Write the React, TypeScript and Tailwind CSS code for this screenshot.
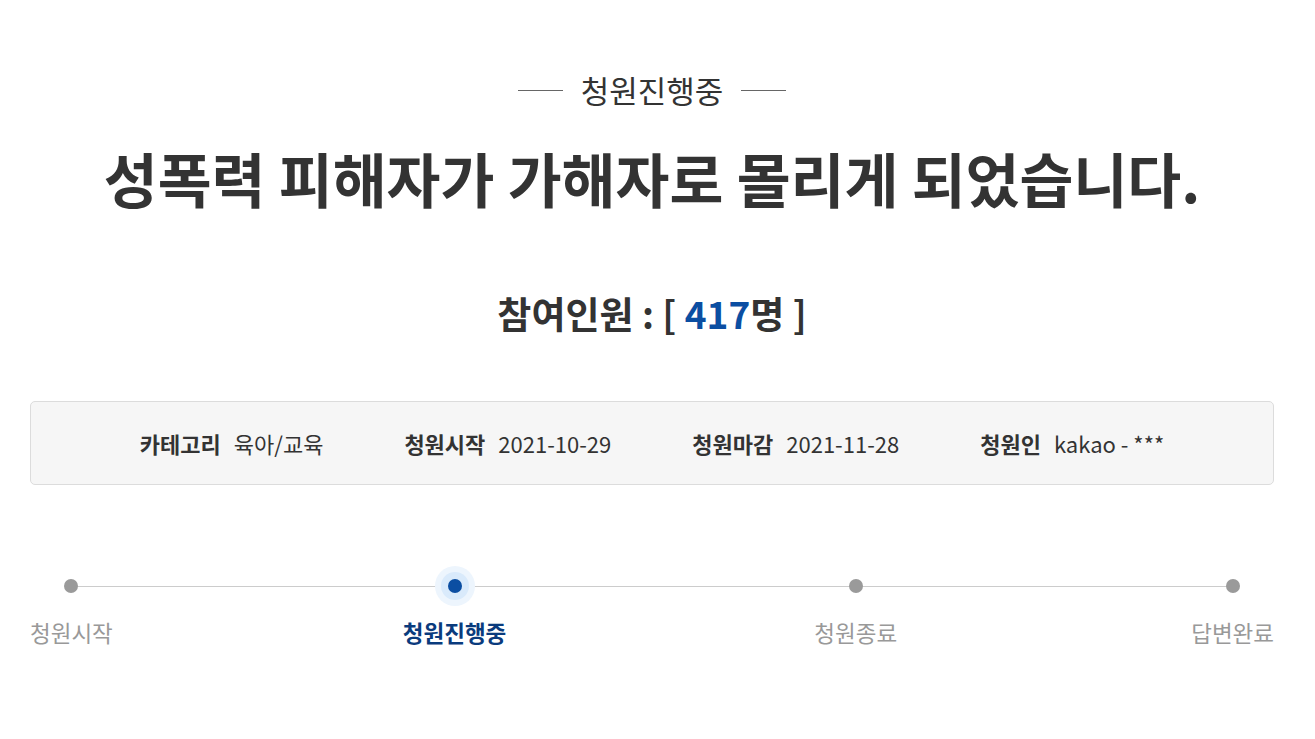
const font = { fontFamily: '"Noto Sans CJK KR", "Noto Sans", sans-serif' };

type Step = { label: string; active?: boolean };

const steps: Step[] = [
  { label: '청원시작' },
  { label: '청원진행중', active: true },
  { label: '청원종료' },
  { label: '답변완료' },
];

const info = [
  { label: '카테고리', value: '육아/교육' },
  { label: '청원시작', value: '2021-10-29' },
  { label: '청원마감', value: '2021-11-28' },
  { label: '청원인', value: 'kakao - ***' },
];

function StepItem({ step }: { step: Step }) {
  return (
    <div className="flex flex-col items-center">
      <div className="relative flex h-[40px] w-[40px] items-center justify-center">
        {step.active ? (
          <>
            <span className="absolute inset-0 rounded-full bg-[#edf5fd]" />
            <span className="absolute inset-[6px] rounded-full bg-[#d9eafb]" />
            <span className="relative h-[14px] w-[14px] rounded-full bg-[#0b4ea2]" />
          </>
        ) : (
          <span className="relative h-[14px] w-[14px] rounded-full bg-[#9a9a9a]" />
        )}
      </div>
      <span
        className={`mt-[13px] text-[22.5px] leading-[26px] ${
          step.active ? 'font-bold text-[#0a3b7d]' : 'text-[#999]'
        }`}
      >
        {step.label}
      </span>
    </div>
  );
}

export default function App() {
  return (
    <main className="min-h-screen bg-white text-[#333]" style={font}>
      <div className="w-[1244px] ml-[30px] flex flex-col items-center">
        {/* status */}
        <div className="mt-[71px] flex items-center gap-[18px]">
          <span className="h-px w-[45px] bg-[#666]" />
          <span className="text-[31px] leading-[38px] text-[#333]">청원진행중</span>
          <span className="h-px w-[45px] bg-[#666]" />
        </div>

        <h1 className="mt-[37px] text-[58.6px] leading-[64px] font-bold text-[#333]">
          성폭력 피해자가 가해자로 몰리게 되었습니다.
        </h1>

        <p className="mt-[79px] text-[37px] leading-[48px] font-bold text-[#333]">
          참여인원 : [ <span className="text-[#0b4ea2]">417</span>명 ]
        </p>

        {/* info box */}
        <div className="mt-[64px] flex h-[84px] w-full items-center justify-center gap-[81px] rounded-[5px] border border-[#dcdcdc] bg-[#f6f6f6]">
          {info.map((item) => (
            <div key={item.label} className="flex items-center gap-[13px] text-[22px] leading-[28px]">
              <span className="font-bold text-[#333]">{item.label}</span>
              <span className="text-[#333]">{item.value}</span>
            </div>
          ))}
        </div>

        {/* progress */}
        <div className="relative mt-[81px] w-full">
          <span className="absolute left-[40px] right-[40px] top-[20px] h-px bg-[#cccccc]" />
          <div className="relative flex items-start">
            <StepItem step={steps[0]} />
            <div className="ml-[290px]">
              <StepItem step={steps[1]} />
            </div>
            <div className="ml-[308px]">
              <StepItem step={steps[2]} />
            </div>
            <div className="ml-auto">
              <StepItem step={steps[3]} />
            </div>
          </div>
        </div>
      </div>
    </main>
  );
}
